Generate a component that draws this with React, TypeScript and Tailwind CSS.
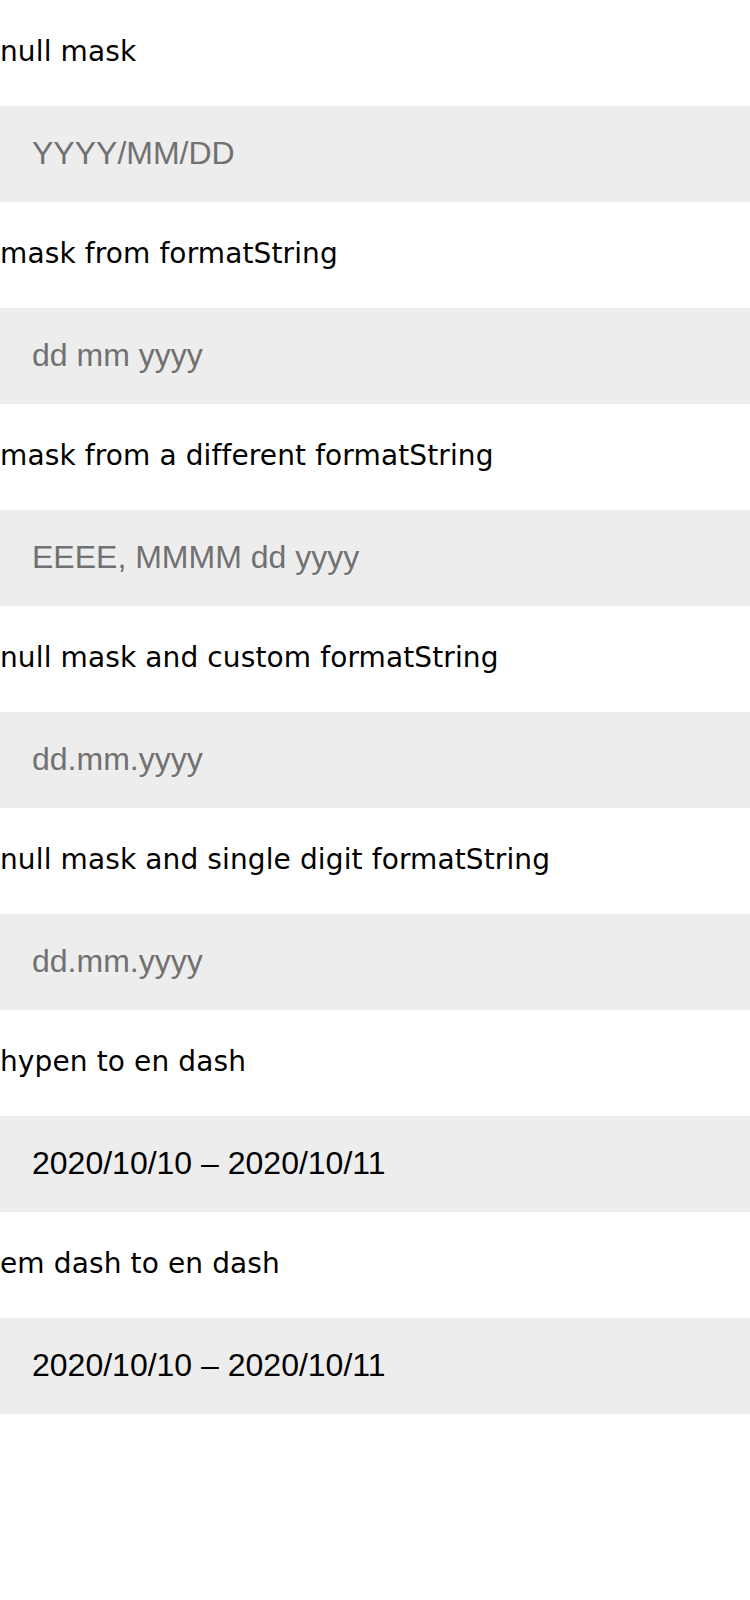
import { useState } from 'react';

// ── Test cases for the masked date input ─────────────────────────────────────
const CASES = [
  { label: 'null mask', placeholder: 'YYYY/MM/DD', value: '' },
  { label: 'mask from formatString', placeholder: 'dd mm yyyy', value: '' },
  { label: 'mask from a different formatString', placeholder: 'EEEE, MMMM dd yyyy', value: '' },
  { label: 'null mask and custom formatString', placeholder: 'dd.mm.yyyy', value: '' },
  { label: 'null mask and single digit formatString', placeholder: 'dd.mm.yyyy', value: '' },
  { label: 'hypen to en dash', placeholder: '', value: '2020/10/10 – 2020/10/11' },
  { label: 'em dash to en dash', placeholder: '', value: '2020/10/10 – 2020/10/11' },
];

function MaskedField({ label, placeholder, value }: { label: string; placeholder: string; value: string }) {
  const [text, setText] = useState(value);
  return (
    <div>
      <div className="h-[106px] pt-[36px] text-[28px] leading-[32px] tracking-[0.12px] text-black font-['DejaVu_Sans',sans-serif]">
        {label}
      </div>
      <input
        type="text"
        value={text}
        placeholder={placeholder}
        onChange={e => setText(e.target.value)}
        className="block w-full h-[96px] bg-[#ededed] px-[32px] pb-[2px] text-[32px] text-black font-['Liberation_Sans',Arial,sans-serif] outline-none placeholder:text-[#717171]"
      />
    </div>
  );
}

export default function App() {
  return (
    <div className="w-[750px] min-h-[1600px] bg-white">
      {CASES.map((c, i) => (
        <MaskedField key={i} label={c.label} placeholder={c.placeholder} value={c.value} />
      ))}
    </div>
  );
}
